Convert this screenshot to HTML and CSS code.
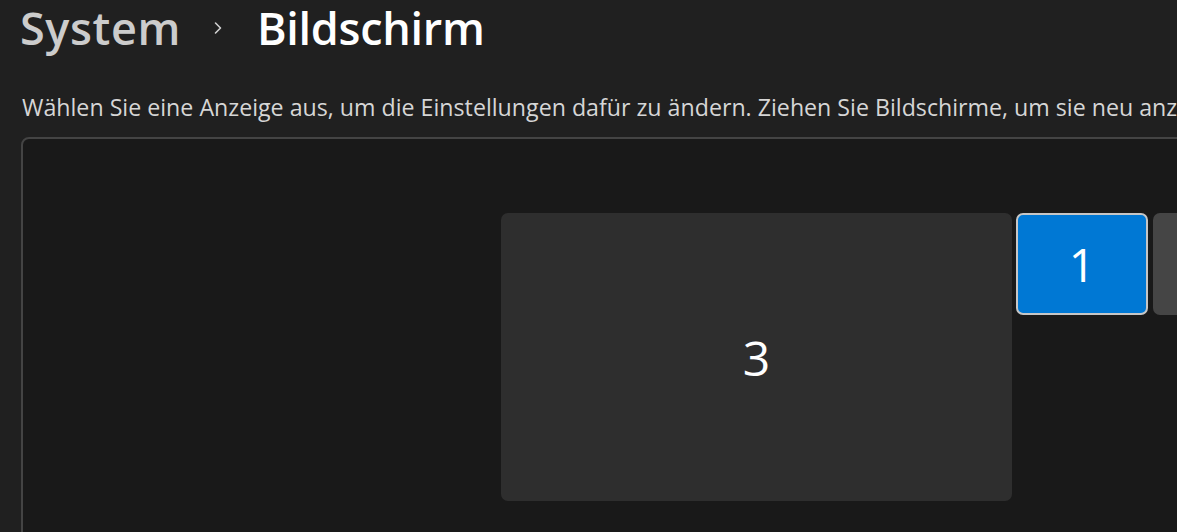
FILE: index.html
```html
<!DOCTYPE html>
<html lang="de">
<head>
<meta charset="utf-8">
<title>Bildschirm</title>
<link rel="stylesheet" href="styles.css">
</head>
<body>
<header class="breadcrumb">
  <span class="crumb-parent">System</span>
  <svg class="chevron" width="10" height="14" viewBox="0 0 10 14" aria-hidden="true"><path d="M2.5 2 L7.5 7 L2.5 12" fill="none" stroke="#d0d0d0" stroke-width="1.6" stroke-linecap="round" stroke-linejoin="round"/></svg>
  <span class="crumb-current">Bildschirm</span>
</header>
<p class="hint">Wählen Sie eine Anzeige aus, um die Einstellungen dafür zu ändern. Ziehen Sie Bildschirme, um sie neu anzuordnen.</p>
<section class="arrange">
  <div class="monitors">
    <div class="monitor monitor-large"><span>3</span></div>
    <div class="monitor monitor-selected"><span>1</span></div>
    <div class="monitor monitor-small"><span>2</span></div>
  </div>
</section>
</body>
</html>
```
FILE: styles.css
```css
html, body {
  margin: 0;
  padding: 0;
  background: #202020;
  overflow: hidden;
  width: 1177px;
  height: 532px;
}
body {
  font-family: "Open Sans", "Noto Sans", sans-serif;
  color: #ffffff;
}
.breadcrumb {
  display: flex;
  align-items: center;
  height: 56px;
  padding-left: 20px;
  white-space: nowrap;
}
.crumb-parent {
  font-size: 45px;
  line-height: 54px;
  font-weight: 600;
  color: #cccccc;
  letter-spacing: 0.6px;
}
.chevron {
  margin: 0 34px 0 32px;
}
.crumb-current {
  font-size: 45px;
  line-height: 54px;
  font-weight: 600;
  color: #ffffff;
  letter-spacing: -0.3px;
}
.hint {
  margin: 37px 0 0 22px;
  font-size: 23.2px;
  color: #d6d6d6;
  white-space: nowrap;
  line-height: 28px;
}
.arrange {
  margin: 16px 0 0 21px;
  width: 1300px;
  height: 500px;
  box-sizing: border-box;
  border: 2px solid #444444;
  border-radius: 8px;
  background: #191919;
}
.monitors {
  display: flex;
  align-items: flex-start;
  padding: 74px 0 0 478px;
}
.monitor {
  display: flex;
  align-items: center;
  justify-content: center;
  box-sizing: border-box;
  border-radius: 7px;
  font-size: 46px;
  color: #ffffff;
  flex: none;
}
.monitor-large {
  width: 511px;
  height: 288px;
  background: #2e2e2e;
  font-size: 48px;
}
.monitor-selected {
  margin-left: 4px;
  width: 132px;
  height: 102px;
  background: #0078d4;
  border: 2px solid #c6c6c6;
}
.monitor-small {
  margin-left: 5px;
  width: 132px;
  height: 102px;
  background: #454545;
}
```
